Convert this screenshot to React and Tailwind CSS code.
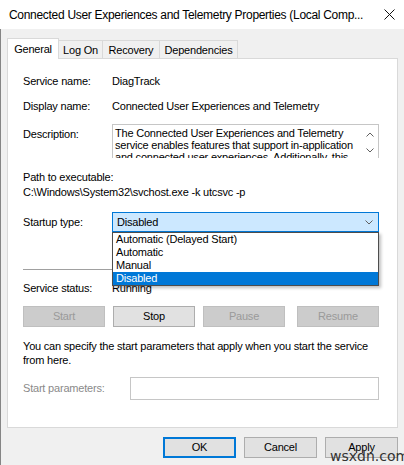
import { useState } from "react";

const font = { fontFamily: '"Liberation Sans", Arial, sans-serif' };

const tabs = [
  { label: "General", w: "w-[52px]" },
  { label: "Log On", w: "w-[45px]" },
  { label: "Recovery", w: "w-[58px]" },
  { label: "Dependencies", w: "w-[79px]" },
];

const startupOptions = ["Automatic (Delayed Start)", "Automatic", "Manual", "Disabled"];

function Chevron({ up = false }) {
  return (
    <svg width="8" height="5" viewBox="0 0 8 5" className="block">
      <path
        d={up ? "M0.5 4.5 L4 1 L7.5 4.5" : "M0.5 0.5 L4 4 L7.5 0.5"}
        fill="none"
        stroke="#606060"
        strokeWidth="1"
      />
    </svg>
  );
}

function DlgButton({ children, disabled, primary, className = "" }) {
  if (disabled) {
    return (
      <div className={`h-[21px] flex items-center justify-center border border-[#bfbfbf] bg-[#cccccc] text-[#9a9a9a] ${className}`}>
        {children}
      </div>
    );
  }
  return (
    <div
      className={`h-[21px] flex items-center justify-center bg-[#e1e1e1] text-black ${
        primary ? "border-2 border-[#0078d7]" : "border border-[#adadad]"
      } ${className}`}
    >
      {children}
    </div>
  );
}

export default function App() {
  const [tab] = useState("General");
  const [startup] = useState("Disabled");

  return (
    <div
      className="relative w-[404px] h-[465px] overflow-hidden bg-[#f0f0f0] text-[11px] tracking-[-0.2px] text-black"
      style={font}
    >
      {/* title bar */}
      <div className="h-[29px] bg-white flex items-center pl-[9px] pr-[9px]">
        <div className="flex-1 text-[12px] tracking-[-0.3px] whitespace-nowrap">
          Connected User Experiences and Telemetry Properties (Local Comp...
        </div>
        <svg width="11" height="11" viewBox="0 0 11 11" className="mr-[0px]">
          <path d="M0.5 0.5 L10.5 10.5 M10.5 0.5 L0.5 10.5" stroke="#111" strokeWidth="1" />
        </svg>
      </div>

      <div className="h-[436px] border-l border-[#858585]">
        {/* tabs */}
        <div className="flex items-end pl-[6px] pt-[9px] h-[29px]">
          {tabs.map((t) =>
            t.label === tab ? (
              <div
                key={t.label}
                className={`${t.w} h-[21px] -mb-px relative z-10 bg-white border border-b-0 border-[#d9d9d9] flex items-start justify-center pt-[2px]`}
              >
                {t.label}
              </div>
            ) : (
              <div
                key={t.label}
                className={`${t.w} h-[18px] -ml-px first:ml-0 bg-[#f0f0f0] border border-b-0 border-[#d9d9d9] flex items-center justify-center pt-[1px]`}
              >
                {t.label}
              </div>
            )
          )}
        </div>

        {/* panel */}
        <div className="ml-[6px] w-[391px] h-[370px] bg-white border border-[#d9d9d9] pl-[15px] pr-[18px] flex flex-col">
          <div className="mt-[14px] h-[16px] flex items-center">
            <div className="w-[89px]">Service name:</div>
            <div>DiagTrack</div>
          </div>
          <div className="mt-[9px] h-[16px] flex items-center">
            <div className="w-[89px]">Display name:</div>
            <div>Connected User Experiences and Telemetry</div>
          </div>

          <div className="mt-[10px] flex">
            <div className="w-[89px] pt-[4px] h-[16px] flex items-center">Description:</div>
            <div className="w-[267px] h-[34px] border border-b-0 border-[#c6c6c6] flex overflow-hidden">
              <div className="flex-1 pl-[2px] pt-[2px] leading-[12px] whitespace-nowrap">
                <div>The Connected User Experiences and Telemetry</div>
                <div>service enables features that support in-application</div>
                <div>and connected user experiences. Additionally, this</div>
              </div>
              <div className="w-[17px] flex flex-col items-center pt-[7px] gap-[11px]">
                <Chevron up />
                <Chevron />
              </div>
            </div>
          </div>

          <div className="mt-[12px] h-[15px] flex items-center">Path to executable:</div>
          <div className="h-[15px] flex items-center">C:\Windows\System32\svchost.exe -k utcsvc -p</div>

          <div className="mt-[12px] flex items-center">
            <div className="w-[89px]">Startup type:</div>
            <div className="relative w-[267px]">
              <div className="h-[20px] bg-[#cce8ff] border border-[#0078d7] flex items-center pl-[4px] pr-[5px]">
                <div className="flex-1">{startup}</div>
                <Chevron />
              </div>
              <div className="absolute left-0 top-[20px] w-[267px] z-20 bg-white border border-[#4d4d4d] shadow-[2px_2px_3px_rgba(0,0,0,0.25)]">
                {startupOptions.map((o) => (
                  <div
                    key={o}
                    className={`h-[13px] leading-[13px] pl-[3px] ${
                      o === startup ? "bg-[#0078d7] text-white" : ""
                    }`}
                  >
                    {o}
                  </div>
                ))}
              </div>
            </div>
          </div>

          <div className="mt-[37px] h-px bg-[#a0a0a0] w-[356px]" />

          <div className="mt-[10px] h-[16px] flex items-center">
            <div className="w-[89px]">Service status:</div>
            <div>Running</div>
          </div>

          <div className="mt-[10px] flex">
            <DlgButton disabled className="w-[82px]">Start</DlgButton>
            <DlgButton className="w-[82px] ml-[8px]">Stop</DlgButton>
            <DlgButton disabled className="w-[82px] ml-[8px]">Pause</DlgButton>
            <DlgButton disabled className="w-[82px] ml-[12px]">Resume</DlgButton>
          </div>

          <div className="mt-[12px] leading-[14px]">
            <div>You can specify the start parameters that apply when you start the service</div>
            <div>from here.</div>
          </div>

          <div className="mt-[10px] flex items-center">
            <div className="w-[107px] text-[#8a8a8a]">Start parameters:</div>
            <div className="w-[249px] h-[23px] border border-[#c6c6c6] bg-white" />
          </div>
        </div>

        {/* dialog buttons */}
        <div className="mt-[9px] flex justify-end pr-[6px] gap-[8px]">
          <DlgButton primary className="w-[73px] !h-[21px]">OK</DlgButton>
          <DlgButton className="w-[73px]">Cancel</DlgButton>
          <DlgButton className="w-[73px]">Apply</DlgButton>
        </div>
      </div>

      {/* watermark */}
      <div
        className="absolute left-[330px] top-[446px] text-[14px] tracking-normal text-[#333]"
        style={{ fontFamily: '"DejaVu Sans", sans-serif' }}
      >
        wsxdn.com
      </div>
    </div>
  );
}
